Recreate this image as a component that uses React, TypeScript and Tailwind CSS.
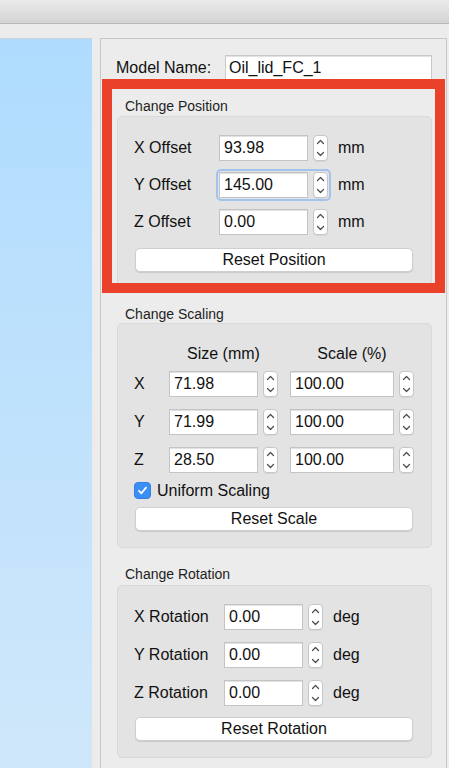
import React from 'react';

const FONT = { fontFamily: '"Liberation Sans", Arial, Helvetica, sans-serif' };

// little up/down arrows next to each number field
const Stepper: React.FC = () => (
  <div className="w-[15px] h-[26px] bg-white border border-[#c6c6c6] rounded-[4px] flex items-center justify-center shadow-[0_1px_0_rgba(0,0,0,0.05)]">
    <svg width="9" height="20" viewBox="0 0 9 20" fill="none" stroke="#4a4a4a" strokeWidth="1.2" strokeLinecap="round" strokeLinejoin="round">
      <path d="M1.5 5.5 L4.5 2.5 L7.5 5.5" />
      <path d="M1.5 14.5 L4.5 17.5 L7.5 14.5" />
    </svg>
  </div>
);

const NumberField: React.FC<{ value: string; width: string; focused?: boolean }> = ({ value, width, focused }) => (
  <div className={`flex items-center gap-[5px] rounded-[2px] ${focused ? 'outline-2 outline-solid outline-[#a3c3ec] outline-offset-[1px]' : ''}`}>
    <div className={`${width} h-[26px] bg-white border border-[#c4c4c4] shadow-[inset_0_1px_0_#e2e2e2] pl-[4px] flex items-center text-[16px] text-[#111]`}>
      {value}
    </div>
    <Stepper />
  </div>
);

const PushButton: React.FC<{ label: string; className?: string }> = ({ label, className }) => (
  <div className={`w-[278px] h-[24px] bg-white rounded-[5px] border border-[#cfcfcf] shadow-[0_1px_1px_rgba(0,0,0,0.12)] flex items-center justify-center text-[16px] text-[#111] ${className ?? ''}`}>
    {label}
  </div>
);

const GroupTitle: React.FC<{ text: string; className?: string }> = ({ text, className }) => (
  <div className={`ml-[24px] h-[17px] leading-[17px] text-[14px] text-[#1e1e1e] ${className ?? ''}`}>{text}</div>
);

const GroupBox: React.FC<{ children: React.ReactNode; className?: string }> = ({ children, className }) => (
  <div className={`ml-[16px] w-[315px] bg-[#e3e3e3] border border-[#d9d9d9] rounded-[5px] pl-[16px] flex flex-col ${className ?? ''}`}>
    {children}
  </div>
);

const OffsetRow: React.FC<{ label: string; value: string; focused?: boolean; labelW: string; inputW: string; unit: string; unitGap: string }> = ({ label, value, focused, labelW, inputW, unit, unitGap }) => (
  <div className="flex items-center h-[26px] text-[16px] text-[#111]">
    <div className={labelW}>{label}</div>
    <NumberField value={value} width={inputW} focused={focused} />
    <div className={unitGap}>{unit}</div>
  </div>
);

const ScaleRow: React.FC<{ axis: string; size: string; scale: string }> = ({ axis, size, scale }) => (
  <div className="flex items-center h-[26px] text-[16px] text-[#111]">
    <div className="w-[35px]">{axis}</div>
    <NumberField value={size} width="w-[89px]" />
    <div className="ml-[12px]">
      <NumberField value={scale} width="w-[104px]" />
    </div>
  </div>
);

export default function App() {
  return (
    <div className="relative w-[449px] h-[768px] overflow-hidden bg-[#ececec] select-none" style={FONT}>
      {/* window toolbar strip */}
      <div className="h-[24px] bg-gradient-to-b from-[#ebebeb] to-[#d3d3d3] border-b border-[#b8b8b8]" />

      <div className="flex pt-[14px] h-[744px]">
        {/* 3D view */}
        <div className="w-[92px] h-full border-t border-[#cdd3d8] bg-gradient-to-b from-[#afdcfe] to-[#cfe7fa]" />

        {/* properties panel */}
        <div className="ml-[8px] w-[347px] h-[760px] border border-[#c7c7c7] bg-[#ececec] flex flex-col pt-[16px]">
          <div className="flex items-center pl-[15px] h-[25px] text-[16px] text-[#111]">
            <div className="w-[109px]">Model Name:</div>
            <div className="w-[207px] h-[25px] bg-white border border-[#c9c9c9] shadow-[inset_0_1px_0_#e2e2e2] pl-[3px] flex items-center">Oil_lid_FC_1</div>
          </div>

          <GroupTitle text="Change Position" className="mt-[18px] mb-[1px]" />
          <GroupBox className="pt-[18px] pb-[15px]">
            <div className="flex flex-col gap-[11px]">
              <OffsetRow label="X Offset" value="93.98" labelW="w-[85px]" inputW="w-[89px]" unit="mm" unitGap="ml-[10px]" />
              <OffsetRow label="Y Offset" value="145.00" focused labelW="w-[85px]" inputW="w-[89px]" unit="mm" unitGap="ml-[10px]" />
              <OffsetRow label="Z Offset" value="0.00" labelW="w-[85px]" inputW="w-[89px]" unit="mm" unitGap="ml-[10px]" />
            </div>
            <PushButton label="Reset Position" className="mt-[13px] ml-[1px]" />
          </GroupBox>

          <GroupTitle text="Change Scaling" className="mt-[18px]" />
          <GroupBox className="pt-[20px] pb-[16px]">
            <div className="flex h-[19px] items-center text-[16px] text-[#111]">
              <div className="w-[35px]" />
              <div className="w-[109px] text-center">Size (mm)</div>
              <div className="ml-[12px] w-[124px] text-center">Scale (%)</div>
            </div>
            <div className="mt-[8px] flex flex-col gap-[12px]">
              <ScaleRow axis="X" size="71.98" scale="100.00" />
              <ScaleRow axis="Y" size="71.99" scale="100.00" />
              <ScaleRow axis="Z" size="28.50" scale="100.00" />
            </div>
            <div className="mt-[9px] h-[17px] flex items-center text-[16px] text-[#111]">
              <div className="w-[17px] h-[17px] rounded-[4px] bg-[#3a8ef6] border border-[#2f7fe6] flex items-center justify-center">
                <svg width="11" height="11" viewBox="0 0 11 11" fill="none" stroke="white" strokeWidth="1.8" strokeLinecap="round" strokeLinejoin="round">
                  <path d="M2 5.8 L4.4 8.3 L9 2.6" />
                </svg>
              </div>
              <span className="ml-[6px]">Uniform Scaling</span>
            </div>
            <PushButton label="Reset Scale" className="mt-[8px] ml-[1px]" />
          </GroupBox>

          <GroupTitle text="Change Rotation" className="mt-[18px] mb-[2px]" />
          <GroupBox className="pt-[18px] pb-[16px]">
            <div className="flex flex-col gap-[12px]">
              <OffsetRow label="X Rotation" value="0.00" labelW="w-[90px]" inputW="w-[79px]" unit="deg" unitGap="ml-[10px]" />
              <OffsetRow label="Y Rotation" value="0.00" labelW="w-[90px]" inputW="w-[79px]" unit="deg" unitGap="ml-[10px]" />
              <OffsetRow label="Z Rotation" value="0.00" labelW="w-[90px]" inputW="w-[79px]" unit="deg" unitGap="ml-[10px]" />
            </div>
            <PushButton label="Reset Rotation" className="mt-[11px] ml-[1px]" />
          </GroupBox>
        </div>
      </div>

      {/* red highlight drawn over the position group */}
      <div className="absolute left-[102px] top-[79px] w-[343px] h-[214px] border-[10px] border-[#e9412a] pointer-events-none" />
    </div>
  );
}
